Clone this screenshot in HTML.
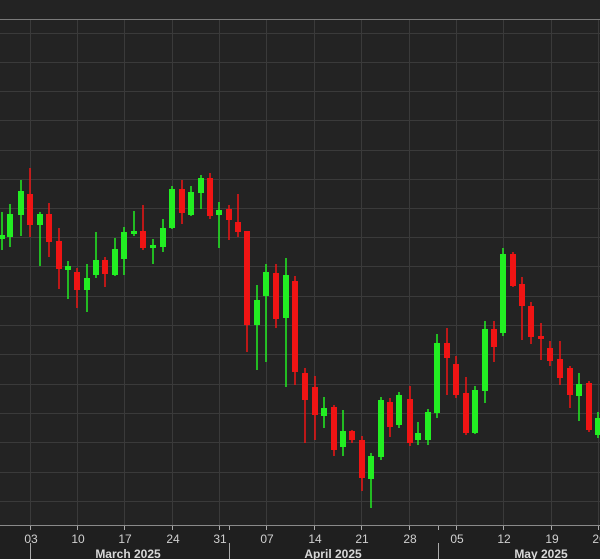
<!DOCTYPE html>
<html><head><style>
html,body{margin:0;padding:0;background:#222;}
svg{display:block}
</style></head><body>
<svg width="600" height="559" viewBox="0 0 600 559" xmlns="http://www.w3.org/2000/svg">
<rect width="600" height="559" fill="#232323"/>
<rect y="526" width="600" height="33" fill="#1f1f1f"/>
<g stroke="#3a3a3a" stroke-width="1">
<line x1="0" y1="33.5" x2="600" y2="33.5"/><line x1="0" y1="62.5" x2="600" y2="62.5"/><line x1="0" y1="91.5" x2="600" y2="91.5"/><line x1="0" y1="120.5" x2="600" y2="120.5"/><line x1="0" y1="150.5" x2="600" y2="150.5"/><line x1="0" y1="179.5" x2="600" y2="179.5"/><line x1="0" y1="208.5" x2="600" y2="208.5"/><line x1="0" y1="237.5" x2="600" y2="237.5"/><line x1="0" y1="266.5" x2="600" y2="266.5"/><line x1="0" y1="296.5" x2="600" y2="296.5"/><line x1="0" y1="325.5" x2="600" y2="325.5"/><line x1="0" y1="354.5" x2="600" y2="354.5"/><line x1="0" y1="384.5" x2="600" y2="384.5"/><line x1="0" y1="413.5" x2="600" y2="413.5"/><line x1="0" y1="442.5" x2="600" y2="442.5"/><line x1="0" y1="472.5" x2="600" y2="472.5"/><line x1="0" y1="501.5" x2="600" y2="501.5"/>
<line x1="30.5" y1="19" x2="30.5" y2="526"/><line x1="77.5" y1="19" x2="77.5" y2="526"/><line x1="124.5" y1="19" x2="124.5" y2="526"/><line x1="172.5" y1="19" x2="172.5" y2="526"/><line x1="219.5" y1="19" x2="219.5" y2="526"/><line x1="266.5" y1="19" x2="266.5" y2="526"/><line x1="314.5" y1="19" x2="314.5" y2="526"/><line x1="361.5" y1="19" x2="361.5" y2="526"/><line x1="409.5" y1="19" x2="409.5" y2="526"/><line x1="456.5" y1="19" x2="456.5" y2="526"/><line x1="503.5" y1="19" x2="503.5" y2="526"/><line x1="551.5" y1="19" x2="551.5" y2="526"/><line x1="598.5" y1="19" x2="598.5" y2="526"/>
</g>
<line x1="0" y1="19.5" x2="600" y2="19.5" stroke="#7a7a7a"/>
<line x1="0" y1="525.5" x2="600" y2="525.5" stroke="#8a8a8a"/>
<g stroke="#22ee22" stroke-width="1.5">
<line x1="2" y1="212" x2="2" y2="250"/><line x1="10" y1="204" x2="10" y2="247"/><line x1="21" y1="180" x2="21" y2="236"/><line x1="40" y1="212" x2="40" y2="266"/><line x1="68" y1="261" x2="68" y2="299"/><line x1="87" y1="264" x2="87" y2="312"/><line x1="96" y1="232" x2="96" y2="278"/><line x1="115" y1="238" x2="115" y2="276"/><line x1="124" y1="227" x2="124" y2="275"/><line x1="134" y1="211" x2="134" y2="236"/><line x1="153" y1="239" x2="153" y2="264"/><line x1="163" y1="219" x2="163" y2="252"/><line x1="172" y1="186" x2="172" y2="229"/><line x1="191" y1="186" x2="191" y2="216"/><line x1="201" y1="175" x2="201" y2="209"/><line x1="219" y1="202" x2="219" y2="248"/><line x1="257" y1="285" x2="257" y2="370"/><line x1="266" y1="264" x2="266" y2="362"/><line x1="286" y1="258" x2="286" y2="387"/><line x1="324" y1="397" x2="324" y2="428"/><line x1="343" y1="410" x2="343" y2="456"/><line x1="371" y1="453" x2="371" y2="508"/><line x1="381" y1="397" x2="381" y2="460"/><line x1="399" y1="392" x2="399" y2="428"/><line x1="418" y1="422" x2="418" y2="445"/><line x1="428" y1="409" x2="428" y2="445"/><line x1="437" y1="334" x2="437" y2="418"/><line x1="475" y1="386" x2="475" y2="434"/><line x1="485" y1="321" x2="485" y2="403"/><line x1="503" y1="248" x2="503" y2="336"/><line x1="579" y1="373" x2="579" y2="421"/><line x1="598" y1="412" x2="598" y2="438"/>
</g>
<g fill="#22ee22">
<rect x="-1" y="235" width="6" height="4"/><rect x="7" y="214" width="6" height="23"/><rect x="18" y="191" width="6" height="24"/><rect x="37" y="214" width="6" height="11"/><rect x="65" y="266" width="6" height="4"/><rect x="84" y="278" width="6" height="12"/><rect x="93" y="260" width="6" height="15"/><rect x="112" y="249" width="6" height="26"/><rect x="121" y="232" width="6" height="27"/><rect x="131" y="231" width="6" height="3"/><rect x="150" y="245" width="6" height="3"/><rect x="160" y="228" width="6" height="19"/><rect x="169" y="189" width="6" height="39"/><rect x="188" y="192" width="6" height="23"/><rect x="198" y="178" width="6" height="15"/><rect x="216" y="210" width="6" height="5"/><rect x="254" y="300" width="6" height="25"/><rect x="263" y="272" width="6" height="24"/><rect x="283" y="275" width="6" height="43"/><rect x="321" y="408" width="6" height="8"/><rect x="340" y="431" width="6" height="16"/><rect x="368" y="456" width="6" height="23"/><rect x="378" y="400" width="6" height="57"/><rect x="396" y="395" width="6" height="30"/><rect x="415" y="433" width="6" height="7"/><rect x="425" y="412" width="6" height="28"/><rect x="434" y="343" width="6" height="70"/><rect x="472" y="390" width="6" height="43"/><rect x="482" y="329" width="6" height="62"/><rect x="500" y="254" width="6" height="79"/><rect x="576" y="384" width="6" height="12"/><rect x="595" y="418" width="6" height="17"/>
</g>
<g stroke="#f01414" stroke-width="1.5">
<line x1="30" y1="168" x2="30" y2="237"/><line x1="49" y1="203" x2="49" y2="257"/><line x1="59" y1="228" x2="59" y2="289"/><line x1="77" y1="268" x2="77" y2="308"/><line x1="105" y1="257" x2="105" y2="287"/><line x1="143" y1="205" x2="143" y2="250"/><line x1="182" y1="180" x2="182" y2="224"/><line x1="210" y1="173" x2="210" y2="219"/><line x1="229" y1="205" x2="229" y2="240"/><line x1="238" y1="194" x2="238" y2="237"/><line x1="247" y1="231" x2="247" y2="352"/><line x1="276" y1="264" x2="276" y2="328"/><line x1="295" y1="276" x2="295" y2="385"/><line x1="305" y1="368" x2="305" y2="443"/><line x1="315" y1="376" x2="315" y2="440"/><line x1="334" y1="405" x2="334" y2="456"/><line x1="352" y1="430" x2="352" y2="443"/><line x1="362" y1="436" x2="362" y2="491"/><line x1="390" y1="398" x2="390" y2="437"/><line x1="410" y1="386" x2="410" y2="446"/><line x1="447" y1="328" x2="447" y2="395"/><line x1="456" y1="356" x2="456" y2="398"/><line x1="466" y1="377" x2="466" y2="435"/><line x1="494" y1="321" x2="494" y2="362"/><line x1="513" y1="252" x2="513" y2="287"/><line x1="522" y1="277" x2="522" y2="340"/><line x1="531" y1="302" x2="531" y2="344"/><line x1="541" y1="323" x2="541" y2="360"/><line x1="550" y1="341" x2="550" y2="366"/><line x1="560" y1="341" x2="560" y2="385"/><line x1="570" y1="366" x2="570" y2="408"/><line x1="589" y1="381" x2="589" y2="432"/>
</g>
<g fill="#f01414">
<rect x="27" y="194" width="6" height="31"/><rect x="46" y="214" width="6" height="28"/><rect x="56" y="241" width="6" height="28"/><rect x="74" y="272" width="6" height="18"/><rect x="102" y="260" width="6" height="14"/><rect x="140" y="231" width="6" height="17"/><rect x="179" y="189" width="6" height="24"/><rect x="207" y="178" width="6" height="38"/><rect x="226" y="209" width="6" height="11"/><rect x="235" y="222" width="6" height="10"/><rect x="244" y="231" width="6" height="94"/><rect x="273" y="273" width="6" height="46"/><rect x="292" y="281" width="6" height="91"/><rect x="302" y="373" width="6" height="27"/><rect x="312" y="387" width="6" height="28"/><rect x="331" y="407" width="6" height="43"/><rect x="349" y="431" width="6" height="9"/><rect x="359" y="440" width="6" height="38"/><rect x="387" y="402" width="6" height="25"/><rect x="407" y="399" width="6" height="44"/><rect x="444" y="343" width="6" height="15"/><rect x="453" y="364" width="6" height="31"/><rect x="463" y="393" width="6" height="40"/><rect x="491" y="329" width="6" height="18"/><rect x="510" y="254" width="6" height="32"/><rect x="519" y="284" width="6" height="22"/><rect x="528" y="306" width="6" height="31"/><rect x="538" y="336" width="6" height="3"/><rect x="547" y="348" width="6" height="13"/><rect x="557" y="359" width="6" height="19"/><rect x="567" y="368" width="6" height="27"/><rect x="586" y="383" width="6" height="47"/>
</g>
<g stroke="#aaa" stroke-width="1">
<line x1="30.5" y1="526" x2="30.5" y2="530"/><line x1="77.5" y1="526" x2="77.5" y2="530"/><line x1="124.5" y1="526" x2="124.5" y2="530"/><line x1="172.5" y1="526" x2="172.5" y2="530"/><line x1="219.5" y1="526" x2="219.5" y2="530"/><line x1="266.5" y1="526" x2="266.5" y2="530"/><line x1="314.5" y1="526" x2="314.5" y2="530"/><line x1="361.5" y1="526" x2="361.5" y2="530"/><line x1="409.5" y1="526" x2="409.5" y2="530"/><line x1="456.5" y1="526" x2="456.5" y2="530"/><line x1="503.5" y1="526" x2="503.5" y2="530"/><line x1="551.5" y1="526" x2="551.5" y2="530"/><line x1="598.5" y1="526" x2="598.5" y2="530"/>
<line x1="229.5" y1="526" x2="229.5" y2="530"/><line x1="438.5" y1="526" x2="438.5" y2="530"/>
<line x1="30.5" y1="543" x2="30.5" y2="559"/><line x1="229.5" y1="543" x2="229.5" y2="559"/><line x1="438.5" y1="543" x2="438.5" y2="559"/>
</g>
<g font-family="Liberation Sans, sans-serif" font-size="12" fill="#d0d0d0" text-anchor="middle">
<text x="31" y="543">03</text><text x="78" y="543">10</text><text x="125" y="543">17</text><text x="173" y="543">24</text><text x="220" y="543">31</text><text x="267" y="543">07</text><text x="315" y="543">14</text><text x="362" y="543">21</text><text x="410" y="543">28</text><text x="457" y="543">05</text><text x="504" y="543">12</text><text x="552" y="543">19</text><text x="599" y="543">26</text>
</g>
<g font-family="Liberation Sans, sans-serif" font-size="12" font-weight="bold" fill="#d8d8d8" text-anchor="middle">
<text x="128" y="558">March 2025</text><text x="333" y="558">April 2025</text><text x="541" y="558">May 2025</text>
</g>
</svg>
</body></html>
